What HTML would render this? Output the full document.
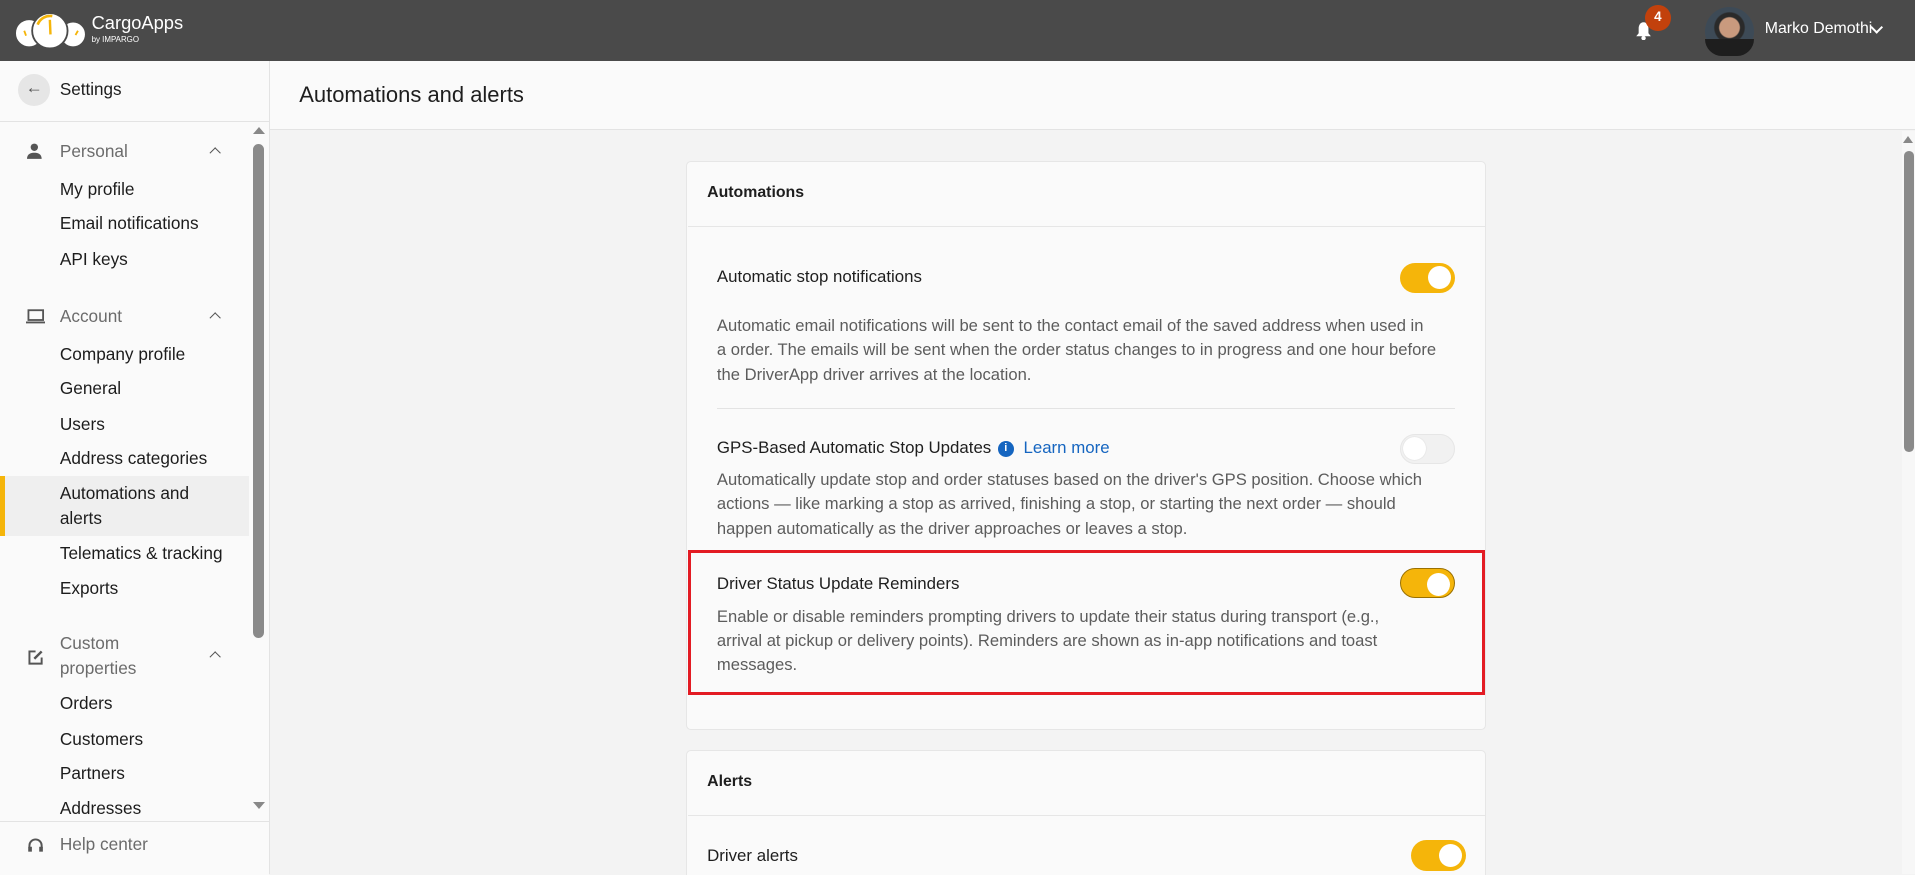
<!DOCTYPE html>
<html><head><meta charset="utf-8"><style>
html{zoom:1.22131;overflow:hidden;width:1568px;height:716px}
body{margin:0;width:1568px;height:716px;overflow:hidden;position:relative;background:#f3f3f3;font-family:"Liberation Sans",sans-serif;color:#222}
.a{position:absolute;white-space:nowrap}
.hdr{left:0;top:0;width:1568px;height:50px;background:#4a4a4a}
.side{left:0;top:50px;width:220px;height:666px;background:#fafafa;border-right:1px solid #e3e3e3}
.si{position:absolute;left:49px;font-size:14.1px;line-height:20px;color:#1c1c1c;white-space:nowrap}
.grp{color:#6b6b6b}
.chev{position:absolute;left:173px;width:6px;height:6px;border-left:1.6px solid #555;border-top:1.6px solid #555;transform:rotate(45deg)}
.card{position:absolute;background:#fafafa;border:1px solid #e6e6e6;border-radius:4px}
.t{font-size:13.8px;color:#1e1e1e}
.d{font-size:13.6px;line-height:20px;color:#5c5c5c}
.tog{position:absolute;width:45px;height:25px;border-radius:13px;background:#f5b50a;box-sizing:border-box}
.tog:after{content:"";position:absolute;right:3px;top:3px;width:19px;height:19px;border-radius:50%;background:#fff}
.off{background:#f1f1f1;border:1px solid #e6e6e6}
.off:after{left:2px;top:2px;right:auto;box-shadow:0 0 1px #ccc}
</style></head><body>
<div class="a hdr"></div>
<svg class="a" style="left:10px;top:8px" width="62" height="36" viewBox="0 0 62 36">
<circle cx="14" cy="19" r="11.5" fill="#fff" stroke="#4a4a4a" stroke-width="1.5"/><circle cx="50" cy="20" r="10.5" fill="#fff" stroke="#4a4a4a" stroke-width="1.5"/><circle cx="31" cy="17" r="14.5" fill="#fff" stroke="#4a4a4a" stroke-width="1.5"/>
<path d="M21 12 A11 11 0 0 1 33 5" stroke="#f5b50a" stroke-width="2.2" fill="none"/>
<path d="M31 8 L31.5 20" stroke="#f5b50a" stroke-width="2"/><path d="M10 17 l1.5 4 M54 17 l-2 3.5" stroke="#f5b50a" stroke-width="1.5"/>
</svg>
<div class="a" style="left:75px;top:10px;font-size:15px;color:#fff">CargoApps</div>
<div class="a" style="left:75px;top:29px;font-size:6.5px;color:#fff">by IMPARGO</div>
<svg class="a" style="left:1339px;top:17px" width="14" height="16" viewBox="0 0 14 16"><path d="M7 1C4 1 3 4 3 6v4L1 12.5h12L11 10V6c0-2-1-5-4-5z" fill="#fff"/><circle cx="7" cy="14" r="1.8" fill="#fff"/></svg>
<div class="a" style="left:1347px;top:4px;width:21px;height:21px;border-radius:50%;background:#c2410c;color:#fff;font-size:11px;font-weight:bold;text-align:center;line-height:20px">4</div>
<div class="a" style="left:1396px;top:6px;width:40px;height:40px;border-radius:50%;background:radial-gradient(circle at 50% 42%,#c99a7e 0 8px,#2a2a2a 9px 12px,#3d4a56 13px)"></div>
<div class="a" style="left:1396px;top:32px;width:40px;height:14px;border-radius:0 0 20px 20px;background:#1e1e1e"></div>
<div class="a" style="left:1445px;top:16px;font-size:13px;color:#fff">Marko Demothi</div>
<div class="a" style="left:1533px;top:19px;width:6px;height:6px;border-right:1.8px solid #fff;border-bottom:1.8px solid #fff;transform:rotate(45deg)"></div>

<div class="a side"></div>
<div class="a" style="left:15px;top:61px;width:26px;height:26px;border-radius:50%;background:#e6e6e6"></div>
<div class="a" style="left:21px;top:64px;font-size:14px;color:#555">←</div>
<div class="si" style="top:64px;font-size:14px">Settings</div>
<div class="a" style="left:0;top:99px;width:220px;height:1px;background:#e3e3e3"></div>
<div class="a" style="left:207px;top:118px;width:9px;height:404px;border-radius:5px;background:#8a8a8a"></div>
<div class="a" style="left:207px;top:104px;border:5px solid transparent;border-bottom:6px solid #888;border-top:0"></div>
<div class="a" style="left:207px;top:657px;border:5px solid transparent;border-top:6px solid #888;border-bottom:0"></div>

<svg class="a" style="left:22px;top:117px" width="12" height="13"><circle cx="6" cy="3.5" r="3" fill="#555"/><path d="M0 13c0-4 3-5 6-5s6 1 6 5z" fill="#555"/></svg>
<div class="si grp" style="top:114px">Personal</div><div class="chev" style="top:122px"></div>
<div class="si" style="top:145px">My profile</div>
<div class="si" style="top:173px">Email notifications</div>
<div class="si" style="top:202px">API keys</div>
<svg class="a" style="left:21px;top:253px" width="16" height="12"><rect x="2" y="1" width="12" height="8" fill="none" stroke="#555" stroke-width="1.5"/><path d="M0 11h16" stroke="#555" stroke-width="1.6"/></svg>
<div class="si grp" style="top:249px">Account</div><div class="chev" style="top:257px"></div>
<div class="si" style="top:280px">Company profile</div>
<div class="si" style="top:308px">General</div>
<div class="si" style="top:337px">Users</div>
<div class="si" style="top:365px">Address categories</div>
<div class="a" style="left:0;top:390px;width:204px;height:49px;background:#efefef"></div>
<div class="a" style="left:0;top:390px;width:4px;height:49px;background:#f5b50a"></div>
<div class="si" style="top:394px">Automations and<br>alerts</div>
<div class="si" style="top:443px">Telematics &amp; tracking</div>
<div class="si" style="top:472px">Exports</div>
<svg class="a" style="left:22px;top:531px" width="14" height="14"><path d="M7 2H2v10h10V7" fill="none" stroke="#555" stroke-width="1.6"/><path d="M6 8l6-6" stroke="#555" stroke-width="2"/></svg>
<div class="si grp" style="top:517px">Custom<br>properties</div><div class="chev" style="top:535px"></div>
<div class="si" style="top:566px">Orders</div>
<div class="si" style="top:595px">Customers</div>
<div class="si" style="top:623px">Partners</div>
<div class="si" style="top:652px">Addresses</div>
<div class="a" style="left:0;top:672px;width:220px;height:44px;background:#fafafa;border-top:1px solid #e3e3e3"></div>
<svg class="a" style="left:22px;top:685px" width="14" height="14"><path d="M2 9V7a5 5 0 0 1 10 0v2" fill="none" stroke="#555" stroke-width="1.6"/><rect x="1" y="8" width="3" height="4" fill="#555"/><rect x="10" y="8" width="3" height="4" fill="#555"/></svg>
<div class="si grp" style="top:681px">Help center</div>

<div class="a" style="left:221px;top:50px;width:1347px;height:56px;background:#fafafa;border-bottom:1px solid #e3e3e3"></div>
<div class="a" style="left:245px;top:67px;font-size:18px;color:#1e1e1e">Automations and alerts</div>
<div class="a" style="left:1557px;top:107px;width:11px;height:609px;background:#f7f7f7"></div>
<div class="a" style="left:1559px;top:124px;width:8px;height:246px;border-radius:4px;background:#8a8a8a"></div>
<div class="a" style="left:1558px;top:111px;border:4.5px solid transparent;border-bottom:6px solid #888;border-top:0"></div>

<div class="card" style="left:562px;top:132px;width:653px;height:464px"></div>
<div class="a t" style="left:579px;top:151px;font-weight:bold;font-size:13px">Automations</div>
<div class="a" style="left:563px;top:185px;width:653px;height:1px;background:#e6e6e6"></div>
<div class="a t" style="left:587px;top:219px">Automatic stop notifications</div>
<div class="tog" style="left:1146px;top:215px"></div>
<div class="a d" style="left:587px;top:257px">Automatic email notifications will be sent to the contact email of the saved address when used in<br>a order. The emails will be sent when the order status changes to in progress and one hour before<br>the DriverApp driver arrives at the location.</div>
<div class="a" style="left:587px;top:334px;width:604px;height:1px;background:#e3e3e3"></div>
<div class="a t" style="left:587px;top:359px">GPS-Based Automatic Stop Updates</div>
<div class="a" style="left:817px;top:361px;width:13px;height:13px;border-radius:50%;background:#1565c0;color:#fff;font-size:9px;font-weight:bold;text-align:center;line-height:13px">i</div>
<div class="a" style="left:838px;top:359px;font-size:13.8px;color:#1565c0">Learn more</div>
<div class="tog off" style="left:1146px;top:355px"></div>
<div class="a d" style="left:587px;top:383px">Automatically update stop and order statuses based on the driver's GPS position. Choose which<br>actions — like marking a stop as arrived, finishing a stop, or starting the next order — should<br>happen automatically as the driver approaches or leaves a stop.</div>
<div class="a" style="left:563px;top:450px;width:648px;height:114px;border:3px solid #e31b23"></div>
<div class="a t" style="left:587px;top:470px">Driver Status Update Reminders</div>
<div class="tog" style="left:1146px;top:465px;border:1px solid #9a7000"></div>
<div class="a d" style="left:587px;top:495px">Enable or disable reminders prompting drivers to update their status during transport (e.g.,<br>arrival at pickup or delivery points). Reminders are shown as in-app notifications and toast<br>messages.</div>

<div class="card" style="left:562px;top:614px;width:653px;height:110px"></div>
<div class="a t" style="left:579px;top:633px;font-weight:bold;font-size:13px">Alerts</div>
<div class="a" style="left:563px;top:667px;width:653px;height:1px;background:#e6e6e6"></div>
<div class="a t" style="left:579px;top:693px">Driver alerts</div>
<div class="tog" style="left:1155px;top:688px"></div>
</body></html>
